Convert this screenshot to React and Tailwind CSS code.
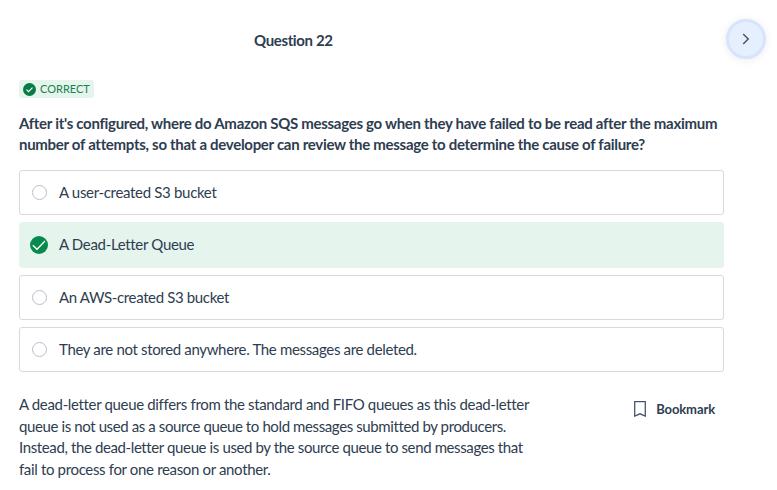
const options = [
  { text: "A user-created S3 bucket", height: "h-[45px] mb-[7px]", tracking: "tracking-[-0.32px]" },
  { text: "A Dead-Letter Queue", correct: true, height: "h-[46px] mb-[7px]", tracking: "tracking-[-0.32px]" },
  { text: "An AWS-created S3 bucket", height: "h-[45px] mb-[7px]", tracking: "tracking-[-0.36px]" },
  { text: "They are not stored anywhere. The messages are deleted.", height: "h-[45px]", tracking: "tracking-[-0.335px]" },
];

const questionLines = [
  "After it's configured, where do Amazon SQS messages go when they have failed to be read after the maximum",
  "number of attempts, so that a developer can review the message to determine the cause of failure?",
];

const explanationLines = [
  { text: "A dead-letter queue differs from the standard and FIFO queues as this dead-letter", tracking: "tracking-[-0.34px]" },
  { text: "queue is not used as a source queue to hold messages submitted by producers.", tracking: "tracking-[-0.39px]" },
  { text: "Instead, the dead-letter queue is used by the source queue to send messages that", tracking: "tracking-[-0.38px]" },
  { text: "fail to process for one reason or another.", tracking: "tracking-[-0.34px]" },
];

function Option({ option }) {
  return (
    <li
      className={`flex items-center rounded-[3px] border ${option.height} ${
        option.correct ? "border-[#e5f4ed] bg-[#e5f4ed] pl-[10px]" : "border-[#d7d9e0] bg-white pl-3"
      }`}
    >
      {option.correct ? (
        <svg className="mr-[11px] h-[18px] w-[18px] shrink-0" viewBox="0 0 18 18" fill="none">
          <circle cx="9" cy="9" r="9" fill="#088a4c" />
          <path d="M2.8 9.3 7 13.3 15 5" stroke="white" strokeWidth="1.3" />
        </svg>
      ) : (
        <span className="mr-3 h-[15px] w-[15px] shrink-0 rounded-full border border-[#babfca]" />
      )}
      <span className={`${option.tracking} ${option.correct ? "-mt-0.5" : ""}`}>{option.text}</span>
    </li>
  );
}

export default function App() {
  return (
    <main className="h-[490px] w-[777px] overflow-hidden bg-white font-['Lato',sans-serif] text-[15px] text-[#2e3d50]">
      <header className="flex h-20 items-start">
        <h1 className="ml-[254px] mt-[30px] text-[15px] leading-[21px] font-bold tracking-[-0.36px] whitespace-nowrap">Question 22</h1>
        <button
          aria-label="Next question"
          className="mr-[11px] mt-[19px] ml-auto flex h-10 w-10 items-center justify-center rounded-full border-[3px] border-[#d6e4fd] bg-[#e6effe] shadow-[0_1px_10px_rgba(0,0,0,0.08)]"
        >
          <svg width="8" height="12" viewBox="0 0 8 12" fill="none">
            <path d="m1.2 1 5 5-5 5" stroke="#46566a" strokeWidth="1.5" />
          </svg>
        </button>
      </header>
      <section className="ml-[19px] w-[705px]">
        <div className="flex h-[18px] w-[75px] items-center rounded-[3px] bg-[#e5f4ed] pl-1 text-[11px] text-[#17834d]">
          <svg className="mr-1 h-[13px] w-[13px] shrink-0" viewBox="0 0 13 13" fill="none">
            <circle cx="6.5" cy="6.5" r="6.5" fill="#087b46" />
            <path d="m3.5 6.6 2 2 4-4" stroke="white" strokeWidth="1.2" />
          </svg>
          <span className="leading-[18px]">CORRECT</span>
        </div>
        <h2 className="mt-[15px] font-bold leading-[21px] tracking-[-0.295px] whitespace-nowrap">
          {questionLines.map((line) => (
            <span key={line} className="block">{line}</span>
          ))}
        </h2>
        <ul className="mt-[15px]">
          {options.map((option) => (
            <Option key={option.text} option={option} />
          ))}
        </ul>
        <div className="mt-[22px] flex items-start justify-between">
          <p className="leading-[21.6px] whitespace-nowrap">
            {explanationLines.map((line) => (
              <span key={line.text} className={`block ${line.tracking}`}>{line.text}</span>
            ))}
          </p>
          <button className="mt-[5px] mr-[9px] flex items-center text-[13px] leading-5 font-bold tracking-[-0.1px]">
            <svg className="mr-[10px] h-4 w-3 shrink-0" viewBox="0 0 12 16" fill="none">
              <path d="M.7.7h10.6v14.4L6 12.8.7 15.1Z" stroke="#46566a" strokeWidth="1.3" />
            </svg>
            Bookmark
          </button>
        </div>
      </section>
    </main>
  );
}
